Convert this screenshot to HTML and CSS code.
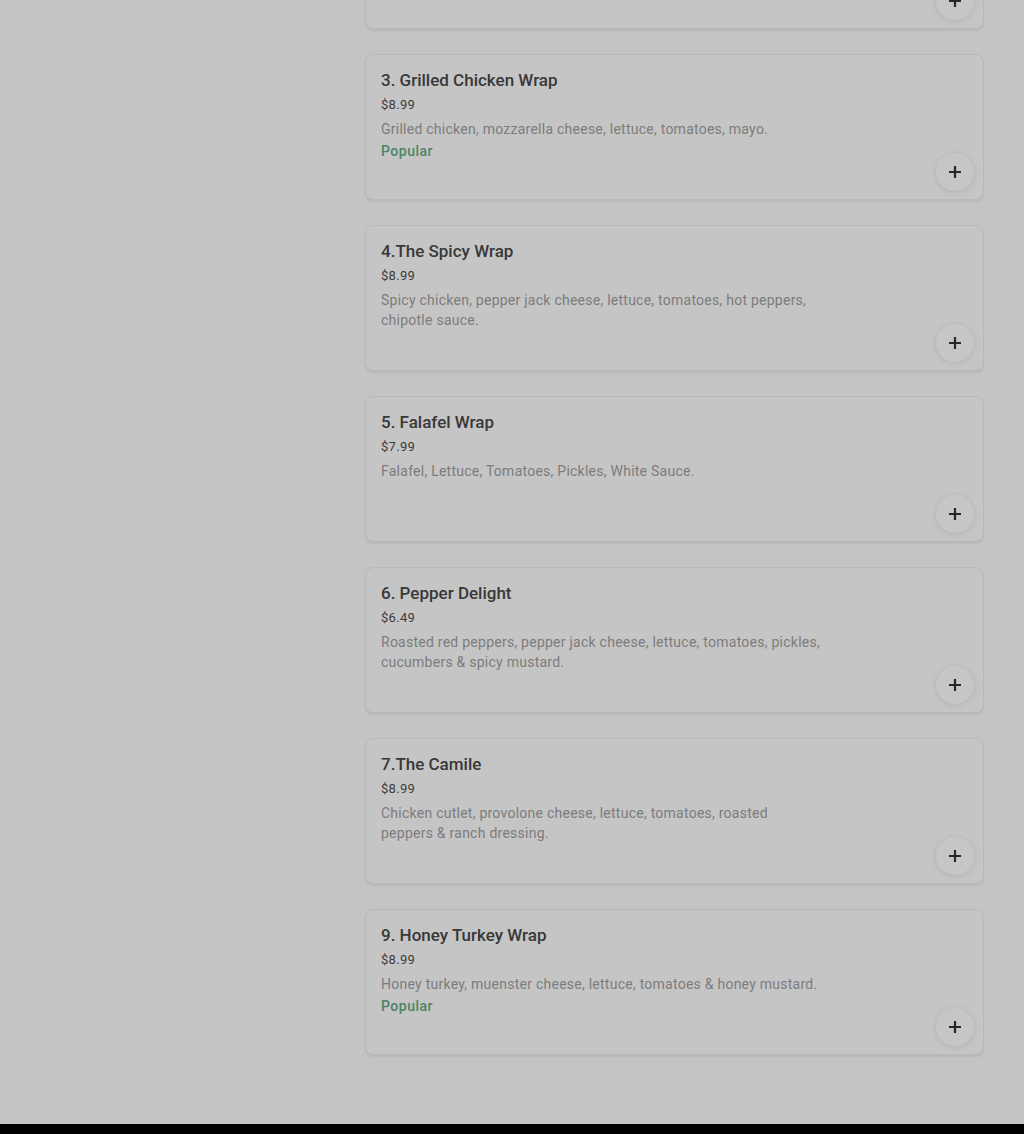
FILE: index.html
```html
<!DOCTYPE html>
<html>
<head>
  <meta charset="UTF-8">
  <title>Wraps</title>
  <link rel="stylesheet" href="styles.css">
</head>
<body>
  <div class="page">
    <div class="sidebar"></div>

    <div class="menu-list">
      <div class="menu-item partial">
        <button class="add-btn" aria-label="Add"><svg viewBox="0 0 12 12"><path d="M6 0v12M0 6h12"/></svg></button>
      </div>

      <div class="menu-item">
        <h3 class="item-name">3. Grilled Chicken Wrap</h3>
        <div class="item-price">$8.99</div>
        <p class="item-desc">Grilled chicken, mozzarella cheese, lettuce, tomatoes, mayo.</p>
        <div class="item-tag">Popular</div>
        <button class="add-btn" aria-label="Add"><svg viewBox="0 0 12 12"><path d="M6 0v12M0 6h12"/></svg></button>
      </div>

      <div class="menu-item">
        <h3 class="item-name">4.The Spicy Wrap</h3>
        <div class="item-price">$8.99</div>
        <p class="item-desc">Spicy chicken, pepper jack cheese, lettuce, tomatoes, hot peppers, chipotle sauce.</p>
        <button class="add-btn" aria-label="Add"><svg viewBox="0 0 12 12"><path d="M6 0v12M0 6h12"/></svg></button>
      </div>

      <div class="menu-item">
        <h3 class="item-name">5. Falafel Wrap</h3>
        <div class="item-price">$7.99</div>
        <p class="item-desc">Falafel, Lettuce, Tomatoes, Pickles, White Sauce.</p>
        <button class="add-btn" aria-label="Add"><svg viewBox="0 0 12 12"><path d="M6 0v12M0 6h12"/></svg></button>
      </div>

      <div class="menu-item">
        <h3 class="item-name">6. Pepper Delight</h3>
        <div class="item-price">$6.49</div>
        <p class="item-desc">Roasted red peppers, pepper jack cheese, lettuce, tomatoes, pickles, cucumbers &amp; spicy mustard.</p>
        <button class="add-btn" aria-label="Add"><svg viewBox="0 0 12 12"><path d="M6 0v12M0 6h12"/></svg></button>
      </div>

      <div class="menu-item">
        <h3 class="item-name">7.The Camile</h3>
        <div class="item-price">$8.99</div>
        <p class="item-desc">Chicken cutlet, provolone cheese, lettuce, tomatoes, roasted peppers &amp; ranch dressing.</p>
        <button class="add-btn" aria-label="Add"><svg viewBox="0 0 12 12"><path d="M6 0v12M0 6h12"/></svg></button>
      </div>

      <div class="menu-item">
        <h3 class="item-name">9. Honey Turkey Wrap</h3>
        <div class="item-price">$8.99</div>
        <p class="item-desc">Honey turkey, muenster cheese, lettuce, tomatoes &amp; honey mustard.</p>
        <div class="item-tag">Popular</div>
        <button class="add-btn" aria-label="Add"><svg viewBox="0 0 12 12"><path d="M6 0v12M0 6h12"/></svg></button>
      </div>
    </div>
  </div>

  <div class="footer"></div>
</body>
</html>
```

FILE: styles.css
```css
:root {
  --page-bg: #c4c4c4;
  --card-bg: #c5c5c5;
  --card-border: #b9b9b9;
  --title-color: #383838;
  --price-color: #3c3c3c;
  --desc-color: #7c7c7c;
  --tag-color: #4b8466;
}

* {
  margin: 0;
  padding: 0;
  box-sizing: border-box;
}

body {
  font-family: Roboto, 'Noto Sans', sans-serif;
  background-color: var(--page-bg);
  width: 1024px;
  height: 1134px;
  overflow: hidden;
}

.page {
  display: flex;
  height: 1124px;
}

.sidebar {
  width: 365px;
  flex-shrink: 0;
}

.menu-list {
  width: 619px;
  display: flex;
  flex-direction: column;
  gap: 25px;
  margin-top: -119px;
}

.menu-item {
  position: relative;
  height: 146px;
  padding: 13px 15px 0;
  background-color: var(--card-bg);
  border: 1px solid var(--card-border);
  border-radius: 8px;
  box-shadow: 0 2px 2px rgba(0, 0, 0, 0.06);
}

.menu-item.partial {
  height: 148px;
}

.item-name {
  font-size: 17px;
  font-weight: 500;
  line-height: 24px;
  color: var(--title-color);
}

.item-price {
  margin-top: 1px;
  font-size: 13px;
  line-height: 24px;
  letter-spacing: 0.3px;
  color: var(--price-color);
}

.item-desc {
  margin-top: 2px;
  font-size: 14px;
  line-height: 20px;
  letter-spacing: 0.25px;
  color: var(--desc-color);
  max-width: 442px;
}

.item-tag {
  font-size: 14px;
  font-weight: 500;
  line-height: 24px;
  letter-spacing: 0.5px;
  color: var(--tag-color);
}

.add-btn {
  position: absolute;
  right: 9px;
  bottom: 8px;
  width: 38px;
  height: 38px;
  border: none;
  border-radius: 50%;
  background-color: #c6c6c6;
  box-shadow: 0 1px 6px rgba(0, 0, 0, 0.1);
  display: flex;
  align-items: center;
  justify-content: center;
  cursor: pointer;
}

.add-btn svg {
  width: 12px;
  height: 12px;
  stroke: #262626;
  stroke-width: 2.2;
  fill: none;
}

.footer {
  height: 10px;
  background-color: #000;
}
```
